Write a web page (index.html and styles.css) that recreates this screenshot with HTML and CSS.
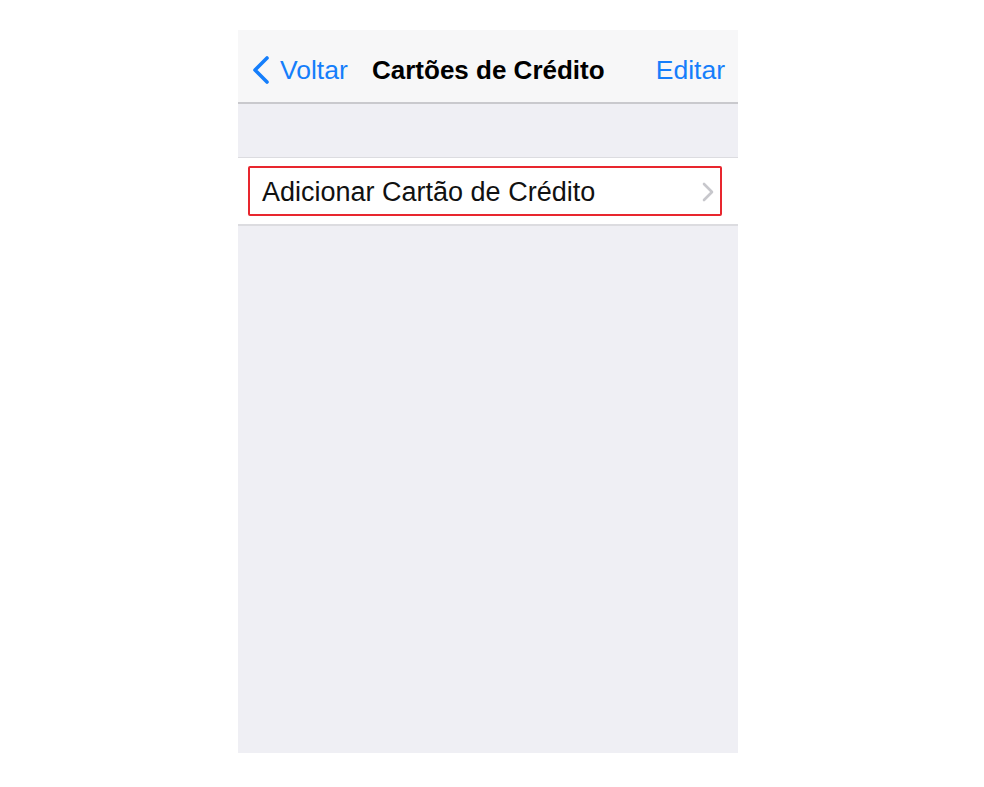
FILE: index.html
```html
<!DOCTYPE html>
<html lang="pt">
<head>
    <meta charset="UTF-8">
    <meta name="viewport" content="width=device-width, initial-scale=1.0">
    <title>Cartões de Crédito</title>
    <link rel="stylesheet" href="styles.css">
</head>
<body>

    <div class="screen">
        <div class="navbar">
            <a class="nav-back" href="#">
                <svg class="back-icon" width="20" height="30" viewBox="0 0 20 30">
                    <path d="M16 3 L4 15 L16 27" fill="none" stroke="#157efb" stroke-width="3.6" stroke-linecap="round" stroke-linejoin="round"/>
                </svg>
                <span>Voltar</span>
            </a>
            <div class="nav-title">Cartões de Crédito</div>
            <a class="nav-action" href="#">Editar</a>
        </div>

        <div class="table-group">
            <div class="table-row">
                <div class="row-highlight">
                    <span class="row-label">Adicionar Cartão de Crédito</span>
                    <svg class="chevron" width="12" height="20" viewBox="0 0 12 20">
                        <path d="M2 2 L10 10 L2 18" fill="none" stroke="#c7c7cc" stroke-width="2.6" stroke-linecap="round" stroke-linejoin="round"/>
                    </svg>
                </div>
            </div>
        </div>
    </div>

</body>
</html>
```

FILE: styles.css
```css
* {
    margin: 0;
    padding: 0;
    box-sizing: border-box;
}

body {
    font-family: 'Liberation Sans', Arial, sans-serif;
    background-color: #fff;
    color: #000;
    padding-top: 30px;
}

.screen {
    width: 500px;
    height: 723px;
    margin-left: 238px;
    background-color: #efeff4;
}

.navbar {
    height: 74px;
    background-color: #f7f7f8;
    border-bottom: 2px solid #c9c9cd;
    display: flex;
    align-items: center;
    padding: 8px 13px 0 13px;
}

.nav-back {
    display: flex;
    align-items: center;
    gap: 9px;
    color: #157efb;
    text-decoration: none;
    font-size: 26.5px;
    width: 121px;
}

.back-icon {
    display: block;
}

.nav-title {
    font-size: 26px;
    font-weight: bold;
    flex: 1;
}

.nav-action {
    color: #157efb;
    text-decoration: none;
    font-size: 26.5px;
}

.table-group {
    padding-top: 53px;
}

.table-row {
    background-color: #fff;
    border-top: 1px solid #dcdce0;
    border-bottom: 2px solid #dcdce0;
    padding: 8px 16px 8px 10px;
}

.row-highlight {
    height: 50px;
    border: 2px solid #e8262e;
    border-radius: 2px;
    display: flex;
    align-items: center;
    justify-content: space-between;
    padding: 2px 6px 0 12px;
}

.row-label {
    font-size: 27px;
    color: #111;
}

.chevron {
    display: block;
}
```
